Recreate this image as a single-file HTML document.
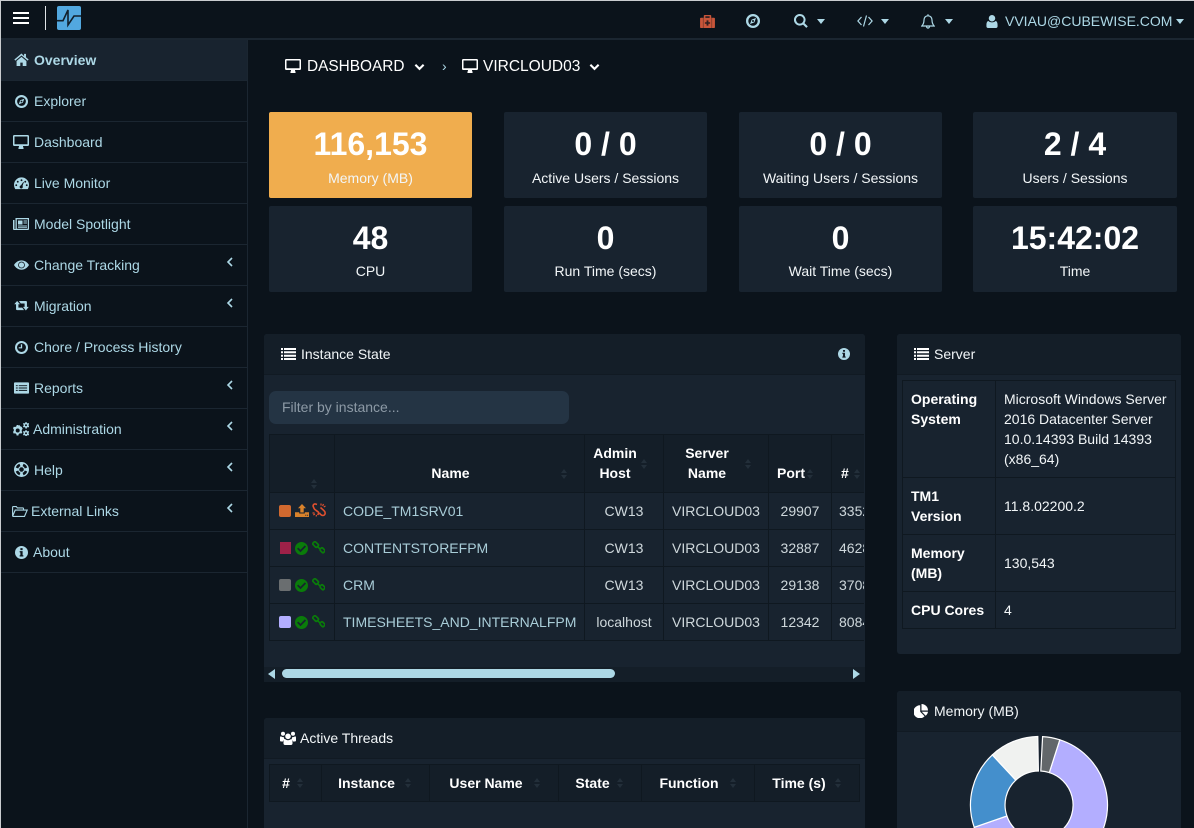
<!DOCTYPE html>
<html><head><meta charset="utf-8"><title>Dashboard</title>
<style>
*{box-sizing:border-box}
html,body{margin:0;padding:0;width:1194px;height:828px;overflow:hidden;background:#0b131b;font:14px/20px "Liberation Sans",sans-serif;color:#fff}
#wrap{position:absolute;left:0;top:0;width:1194px;height:828px;overflow:hidden;background:#0b131b}
.a{position:absolute}
.t{position:absolute;white-space:nowrap}
svg{position:absolute;display:block;overflow:visible}
#edge{left:0;top:0;width:1194px;height:828px;border-left:1px solid #c9cccf;border-top:1px solid #c9cccf;pointer-events:none;z-index:9}
#top{left:0;top:0;width:1194px;height:40px;background:#0b131b;border-bottom:2px solid #1b2631}
#side{left:0;top:40px;width:248px;height:788px;border-right:1px solid #1b2631;background:#0b131b}
.m{position:absolute;left:1px;width:246px;height:41px;border-bottom:1px solid #1b2631;color:#add8e6;line-height:40px}
.m .t{top:0}
.m.on{background:#18232f;font-weight:bold}
.card{position:absolute;width:203px;height:86px;background:#18232f;border-radius:2px;text-align:center}
.card b{display:block;font-size:32px;line-height:36px;margin-top:14px}
.card span{display:block;font-size:14px;line-height:20px;margin-top:6px;color:#f2f6f8}
.card.sec b{margin-top:14px}
.card.sec span{margin-top:5px}
.panel{position:absolute;background:#18232f;border-radius:3px}
.ph{position:absolute;left:0;top:0;right:0;height:41px;background:#141e28;border-bottom:1px solid #111a23;border-radius:3px 3px 0 0}
table{border-collapse:collapse;table-layout:fixed;position:absolute}
th,td{border:1px solid #0f1820}
#it{left:0;top:0;width:632px;font-size:14px}
#it th{background:#141e28;color:#fff;vertical-align:bottom;padding:8px 18px 9px 0;text-align:center;line-height:20px;height:58px}
#it td{height:37px;padding:0;text-align:center;color:#cfd8dc;overflow:hidden;white-space:nowrap}
#it td.n{text-align:left;padding-left:8px;color:#a9cdd8}
#it td.h{text-align:left;padding-left:7px}
#st{left:5px;top:46px;width:273px;color:#f2f6f8}
#st td{padding:8px;vertical-align:middle;text-align:left;line-height:20px}
#st th{padding:8px 8px 8px;vertical-align:top;text-align:left;line-height:20px;color:#fff}
#at{left:5px;top:46px;width:590px}
#at th{background:#141e28;height:37px;text-align:center;padding:0 16px 1px 0;font-weight:bold}
.s{position:absolute;width:7px;height:10px}
.s:before,.s:after{content:"";position:absolute;left:0;border-left:3.5px solid transparent;border-right:3.5px solid transparent}
.s:before{top:0;border-bottom:4px solid #232f3a}
.s:after{bottom:0;border-top:4px solid #232f3a}
</style></head><body>
<svg width="0" height="0" style="position:absolute">
<defs>
<symbol id="home" viewBox="0 0 16 14"><path fill="currentColor" d="M8 .6.300 7l1 1.200L8 2.700l6.700 5.500 1-1.200-2.900-2.400V1h-2v2.300L8 .6zM2.700 8.600V14h4V10.300h2.600V14h4V8.600L8 4.200 2.700 8.600z"/></symbol>
<symbol id="compass" viewBox="1 1 14 14"><path fill="currentColor" fill-rule="evenodd" d="M8 1a7 7 0 1 1 0 14A7 7 0 0 1 8 1zm0 2.300a4.700 4.700 0 1 0 0 9.400 4.700 4.700 0 0 0 0-9.400zM11 5l-1.600 4.400L5 11l1.600-4.400L11 5zM8 7a1 1 0 1 0 0 2 1 1 0 0 0 0-2z"/></symbol>
<symbol id="desk" viewBox="0 0 16 14"><path fill="currentColor" fill-rule="evenodd" d="M1.200 0h13.600C15.500 0 16 .5 16 1.200v8.600c0 .7-.5 1.200-1.200 1.200H10c0 .9.300 1.400.6 2 .2.400 0 1-.6 1H6c-.6 0-.8-.6-.6-1 .3-.6.6-1.100.6-2H1.200C.5 11 0 10.500 0 9.800V1.200C0 .5.500 0 1.200 0zM1.500 1.500v7.800h13V1.500h-13z"/></symbol>
<symbol id="gauge" viewBox="0 0 16 14"><path fill="currentColor" fill-rule="evenodd" d="M8 1a8 8 0 0 1 8 8c0 1.700-.5 3.200-1.300 4.500H1.300A8.300 8.300 0 0 1 0 9a8 8 0 0 1 8-8zM8 3a1 1 0 1 0 0 2 1 1 0 0 0 0-2zM4 4.600a1 1 0 1 0 0 2 1 1 0 0 0 0-2zM12 4.600a1 1 0 1 0 0 2 1 1 0 0 0 0-2zM2.400 8.300a1 1 0 1 0 0 2 1 1 0 0 0 0-2zM13.600 8.300a1 1 0 1 0 0 2 1 1 0 0 0 0-2zM10 5.800 7.400 9.500a1.700 1.700 0 1 0 1.700.7L10.500 6z"/></symbol>
<symbol id="news" viewBox="0 0 16 12"><path fill="currentColor" fill-rule="evenodd" d="M2.500 0H16v11c0 .6-.4 1-1 1H1c-.6 0-1-.4-1-1V2h1.500v9h1V0zM3.800 1.200v9.600h11V1.200h-11zM5 2.500h4.500v4H5v-4zM10.500 2.500H14v1h-3.500zM10.500 4.500H14v1h-3.500zM5 7.500h9v1H5zM5 9h9v.8H5z"/></symbol>
<symbol id="eye" viewBox="0 0 16 10"><path fill="currentColor" fill-rule="evenodd" d="M8 0c3.400 0 6.300 2 8 5-1.700 3-4.600 5-8 5S1.700 8 0 5c1.700-3 4.600-5 8-5zM8 1.400a3.600 3.600 0 1 0 0 7.200 3.600 3.600 0 0 0 0-7.200zM8 2.200a2.800 2.800 0 1 1 0 5.600 2.800 2.800 0 0 1 0-5.600z"/></symbol>
<symbol id="retweet" viewBox="0 0 16 11"><path fill="currentColor" d="M3.200 0 6.400 3.600H4.600v3.700h4.200L10.800 10H3.200c-.7 0-1.200-.5-1.200-1.100V3.600H0L3.200 0zM5.200 0h7.600c.7 0 1.200.5 1.200 1.100v5.300h2L12.800 10.500 9.600 6.400h1.800V2.700H7.200L5.200 0z"/></symbol>
<symbol id="clock" viewBox="1 1 14 14"><path fill="currentColor" fill-rule="evenodd" d="M8 1a7 7 0 1 1 0 14A7 7 0 0 1 8 1zm0 2.200a4.800 4.800 0 1 0 0 9.600 4.800 4.800 0 0 0 0-9.600zM7.300 4.500h1.400V9H5V7.700h2.300V4.500z"/></symbol>
<symbol id="list" viewBox="0 0 15 12"><path fill="currentColor" d="M0 0h2v2H0zM3 0h12v2H3zM0 3.300h2v2H0zM3 3.300h12v2H3zM0 6.700h2v2H0zM3 6.700h12v2H3zM0 10h2v2H0zM3 10h12v2H3z"/></symbol>
<symbol id="card" viewBox="0 0 16 12"><path fill="currentColor" fill-rule="evenodd" d="M1 0h14c.6 0 1 .4 1 1v10c0 .6-.4 1-1 1H1c-.6 0-1-.4-1-1V1c0-.6.4-1 1-1zm1 3v1h2V3H2zm3 0v1h9V3H5zM2 5.500v1h2v-1H2zm3 0v1h9v-1H5zM2 8v1h2V8H2zm3 0v1h9V8H5z"/></symbol>
<symbol id="cogs" viewBox="0 0 16 14"><path fill="currentColor" fill-rule="evenodd" d="M5 3.500 6.300 3l.9 1.300 1.500.6 1 1.800-.8 1-.3 1.400.8 1-1 1.500-1.500-.3-1.200.8-.3 1.400H3.600l-.3-1.400-1.200-.8-1.400.3L0 9.900l.8-1V7.300L0 6.300l.8-1.600 1.400.3 1.200-.8L3.700 3H5zM4.700 6.500a2 2 0 1 0 0 4 2 2 0 0 0 0-4zM12.500 0h1l.3 1 .9.400.9-.4.600.9-.6.800v1l.7.700-.6 1-.9-.3-.9.500-.2 1h-1.200l-.2-1-.9-.5-.9.300-.5-1 .6-.7v-1l-.6-.8.6-.9.9.4.8-.4.200-1zm.5 2.200a1 1 0 1 0 0 2 1 1 0 0 0 0-2zM12.500 8h1l.3 1 .9.400.9-.4.600.9-.6.800v1l.7.700-.6 1-.9-.3-.9.500-.2 1h-1.200l-.2-1-.9-.5-.9.300-.5-1 .6-.7v-1l-.6-.8.600-.9.900.4.800-.4.200-1zm.5 2.200a1 1 0 1 0 0 2 1 1 0 0 0 0-2z"/></symbol>
<symbol id="life" viewBox=".5 .5 15 15"><g transform="rotate(45 8 8)"><path fill="currentColor" fill-rule="evenodd" d="M8 .5a7.500 7.500 0 1 1 0 15 7.500 7.500 0 0 1 0-15zM5.400 2.500l1 2.400a3.400 3.400 0 0 1 3.200 0l1-2.400a6 6 0 0 0-5.200 0zM2.500 5.400A6 6 0 0 0 2.500 10.600l2.400-1a3.400 3.400 0 0 1 0-3.200l-2.400-1zM13.500 5.400l-2.400 1a3.400 3.400 0 0 1 0 3.200l2.400 1a6 6 0 0 0 0-5.200zM6.400 11.100l-1 2.400a6 6 0 0 0 5.200 0l-1-2.400a3.400 3.400 0 0 1-3.200 0zM8 5.700a2.300 2.300 0 1 0 0 4.600 2.300 2.300 0 0 0 0-4.600z"/></g></symbol>
<symbol id="folder" viewBox="0 0 16 11"><path fill="none" stroke="currentColor" stroke-width="1.100" d="M.6 10V1.300c0-.4.300-.7.700-.7h3l1 1.300h5.500c.4 0 .7.300.7.700v1.500M.7 10 3.200 4.100h12l-2.700 6.300H1c-.2 0-.3-.2-.3-.4z"/></symbol>
<symbol id="info" viewBox="1 1 14 14"><path fill="currentColor" fill-rule="evenodd" d="M8 1a7 7 0 1 1 0 14A7 7 0 0 1 8 1zM6.800 3.300v2.100h2.400V3.300H6.800zM6 6.500v1.400h.8v3H6v1.400h4v-1.400h-.8V6.500H6z"/></symbol>
<symbol id="chev" viewBox="0 0 8 12"><path fill="none" stroke="currentColor" stroke-width="1.600" d="M6 2 2 6l4 4"/></symbol>
<symbol id="down" viewBox="0 0 12 8"><path fill="none" stroke="currentColor" stroke-width="2.300" d="M1.500 1.500 6 6l4.500-4.500"/></symbol>
<symbol id="check" viewBox="0 0 14 14"><path fill="currentColor" fill-rule="evenodd" d="M7 0a7 7 0 1 1 0 14A7 7 0 0 1 7 0zm3.600 3.700L5.900 8.300 3.500 6 2.200 7.300l3.700 3.700 6-6-1.300-1.300z"/></symbol>
<symbol id="link" viewBox="0 0 14 14"><g fill="none" stroke="currentColor" stroke-width="1.800"><path d="M2 1.300 1.300 2c-.6.600-.6 1.400 0 2l2.300 2.300c.6.600 1.400.6 2 0L6.500 5.500c.6-.6.600-1.400 0-2L4.200 1.300c-.6-.6-1.600-.6-2.200 0z"/><path d="M9.800 7.700l-.7.700c-.6.600-.6 1.400 0 2l1.700 1.700c.6.600 1.400.6 2 0l.6-.7c.6-.6.600-1.400 0-2L11.700 7.700c-.6-.6-1.300-.6-1.900 0z"/><path d="M5.300 5.300l3.500 3.500"/></g></symbol>
<symbol id="unlink" viewBox="0 0 14 14"><g fill="none" stroke="currentColor" stroke-width="1.600"><path d="M5 1.500 3.500 1C2 .6.700 2 1.200 3.500L2 5.300c.4 1 1 1.500 2 2l2 1.500c1 .8 1 1.500.3 2.200l-.8.800"/><path d="M8.500 4.500l2 1.800c1 .9 2.400 2 2.600 3.200.3 1.500-.6 3-2.300 3-.9 0-1.800-.6-2.500-1.300L7.500 10"/><path stroke-width="1.200" d="M9 .5V2.500M11.500 1 10.600 3M13.500 3 11.800 4M.5 10h2M1.300 12l1.700-1M4 13.500l.6-1.500"/></g></symbol>
<symbol id="upload" viewBox="0 0 14 13"><path fill="currentColor" fill-rule="evenodd" d="M7 0l4 4.200H8.700v4.300H5.300V4.200H3L7 0zM0 8.200h4.200v1.300h5.600V8.200H14V13H0V8.200zm10.300 2.500v1h1v-1h-1zm1.800 0v1h1v-1h-1z"/></symbol>
<symbol id="medkit" viewBox="0 0 16 14"><path fill="currentColor" fill-rule="evenodd" d="M5 0h6c.6 0 1 .4 1 1v2h3c.6 0 1 .4 1 1v9c0 .6-.4 1-1 1H1c-.6 0-1-.4-1-1V4c0-.6.4-1 1-1h3V1c0-.6.4-1 1-1zm.7 1.500V3h4.600V1.500H5.700z"/><path fill="#0b131b" opacity=".35" d="M3 3h1v11H3zM12 3h1v11h-1z"/><path fill="#0b131b" opacity=".8" d="M7 5.800h2v2h1.800v1.600H9v2H7v-2H5.200V7.800H7z"/></symbol>
<symbol id="search" viewBox="0 0 14 14"><path fill="currentColor" fill-rule="evenodd" d="M5.800 0a5.800 5.800 0 0 1 4.700 9.100l3.300 3.300-1.500 1.500-3.300-3.300A5.800 5.800 0 1 1 5.800 0zm0 2a3.800 3.800 0 1 0 0 7.600 3.800 3.800 0 0 0 0-7.600z"/></symbol>
<symbol id="code" viewBox="0 0 16 12"><path fill="none" stroke="currentColor" stroke-width="1.200" d="M4.500 2 .9 6l3.600 4M11.500 2l3.600 4-3.600 4M9.500.5l-3 11"/></symbol>
<symbol id="bell" viewBox="0 0 14 15"><path fill="none" stroke="currentColor" stroke-width="1.200" d="M7 1.800c-2.600 0-4 2-4 4.200 0 3-1 4.800-2.200 6h12.400C12 10.800 11 9 11 6c0-2.200-1.400-4.200-4-4.200zM7 .3v1.500M5.500 12.300c0 1 .7 1.800 1.500 1.800s1.500-.8 1.500-1.800"/></symbol>
<symbol id="user" viewBox="0 0 12 14"><path fill="currentColor" d="M6 0a3.500 3.500 0 1 1 0 7 3.500 3.500 0 0 1 0-7zM2.200 6.500C3 7.400 4.400 8 6 8s3-.6 3.800-1.500C11.300 6.800 12 8.300 12 11v1.300c0 1-.7 1.700-1.700 1.700H1.700C.7 14 0 13.300 0 12.300V11c0-2.700.7-4.200 2.200-4.500z"/></symbol>
<symbol id="pie" viewBox="0 0 14 14"><path fill="currentColor" d="M6.200 1.300v6.500l4.400 4.500A6.500 6.500 0 1 1 6.200 1.300zM7.500 0A6.500 6.500 0 0 1 14 6.500H7.500V0zM7.800 7.800H14a6.300 6.300 0 0 1-2.300 3.900L7.800 7.800z"/></symbol>
<symbol id="users" viewBox="0 0 16 14"><path fill="currentColor" d="M8 2.500a2.800 2.800 0 1 1 0 5.600 2.800 2.800 0 0 1 0-5.600zM3 .8a2 2 0 1 1 0 4 2 2 0 0 1 0-4zM13 .8a2 2 0 1 1 0 4 2 2 0 0 1 0-4zM0 6.800c0-1 .4-1.500 1-1.500.5.500 1.200.8 2 .8.300 0 .6 0 .8-.1 0 .9.400 1.800 1 2.500-.9.300-1.500 1-1.800 2H1c-.6 0-1-.4-1-1V6.800zM16 6.800c0-1-.4-1.500-1-1.500-.5.500-1.200.8-2 .8-.3 0-.6 0-.8-.1 0 .9-.4 1.800-1 2.500.9.300 1.500 1 1.800 2H15c.6 0 1-.4 1-1V6.800zM5 8c.7.700 1.800 1.200 3 1.200s2.300-.5 3-1.200c1 .3 1.500 1.500 1.500 3.200v1.300c0 .8-.6 1.500-1.500 1.500H5c-.9 0-1.500-.7-1.500-1.500v-1.300C3.500 9.500 4 8.300 5 8z"/></symbol>
</defs></svg>

<div id="wrap">
<div class="a" id="top">
  <div class="a" style="left:13px;top:12px;width:16px;height:2px;background:#fff"></div>
  <div class="a" style="left:13px;top:17px;width:16px;height:2px;background:#fff"></div>
  <div class="a" style="left:13px;top:22px;width:16px;height:2px;background:#fff"></div>
  <div class="a" style="left:45px;top:6px;width:1px;height:24px;background:#dfe3e6"></div>
  <svg style="left:57px;top:6px" width="24" height="24" viewBox="0 0 24 24"><rect width="24" height="24" rx="2" fill="#52a8e0"/><path d="M0 14.700h6L11 4v15l6-9h7" fill="none" stroke="#12202c" stroke-width="1.600"/></svg>
  <svg style="left:700px;top:15px;color:#c8553a" width="15" height="13"><use href="#medkit"/></svg>
  <svg style="left:746px;top:14px;color:#add8e6" width="14" height="14"><use href="#compass"/></svg>
  <svg style="left:794px;top:14px;color:#add8e6" width="14" height="14"><use href="#search"/></svg>
  <div class="a" style="left:817px;top:19px;border:4.500px solid transparent;border-top:5px solid #add8e6;border-bottom:0"></div>
  <svg style="left:857px;top:15px;color:#add8e6" width="16" height="12"><use href="#code"/></svg>
  <div class="a" style="left:881px;top:19px;border:4.500px solid transparent;border-top:5px solid #add8e6;border-bottom:0"></div>
  <svg style="left:921px;top:14px;color:#add8e6" width="14" height="15"><use href="#bell"/></svg>
  <div class="a" style="left:945px;top:19px;border:4.500px solid transparent;border-top:5px solid #add8e6;border-bottom:0"></div>
  <svg style="left:986px;top:15px;color:#add8e6" width="12" height="13"><use href="#user"/></svg>
  <span class="t" style="left:1005px;top:11px;color:#add8e6">VVIAU@CUBEWISE.COM</span>
  <div class="a" style="left:1176px;top:19px;border:4.500px solid transparent;border-top:5px solid #add8e6;border-bottom:0"></div>
</div>

<div class="a" id="side">
  <div class="m on" style="top:0"><svg style="left:13px;top:13px" width="15" height="13"><use href="#home"/></svg><span class="t" style="left:33px">Overview</span></div>
  <div class="m" style="top:41px"><svg style="left:14px;top:14px" width="13" height="13"><use href="#compass"/></svg><span class="t" style="left:33px">Explorer</span></div>
  <div class="m" style="top:82px"><svg style="left:12px;top:13px" width="16" height="14"><use href="#desk"/></svg><span class="t" style="left:33px">Dashboard</span></div>
  <div class="m" style="top:123px"><svg style="left:13px;top:13px" width="15" height="14"><use href="#gauge"/></svg><span class="t" style="left:33px">Live Monitor</span></div>
  <div class="m" style="top:164px"><svg style="left:12px;top:14px" width="16" height="12"><use href="#news"/></svg><span class="t" style="left:33px">Model Spotlight</span></div>
  <div class="m" style="top:205px"><svg style="left:13px;top:15px" width="15" height="10"><use href="#eye"/></svg><span class="t" style="left:33px">Change Tracking</span><svg style="left:225px;top:11px" width="8" height="12"><use href="#chev"/></svg></div>
  <div class="m" style="top:246px"><svg style="left:13px;top:15px" width="15" height="10"><use href="#retweet"/></svg><span class="t" style="left:33px">Migration</span><svg style="left:225px;top:11px" width="8" height="12"><use href="#chev"/></svg></div>
  <div class="m" style="top:287px"><svg style="left:14px;top:14px" width="13" height="13"><use href="#clock"/></svg><span class="t" style="left:33px">Chore / Process History</span></div>
  <div class="m" style="top:328px"><svg style="left:13px;top:14px" width="15" height="12"><use href="#card"/></svg><span class="t" style="left:33px">Reports</span><svg style="left:225px;top:11px" width="8" height="12"><use href="#chev"/></svg></div>
  <div class="m" style="top:369px"><svg style="left:12px;top:13px" width="16" height="14"><use href="#cogs"/></svg><span class="t" style="left:32px">Administration</span><svg style="left:225px;top:11px" width="8" height="12"><use href="#chev"/></svg></div>
  <div class="m" style="top:410px"><svg style="left:13px;top:12px" width="15" height="15"><use href="#life"/></svg><span class="t" style="left:33px">Help</span><svg style="left:225px;top:11px" width="8" height="12"><use href="#chev"/></svg></div>
  <div class="m" style="top:451px"><svg style="left:11px;top:15px" width="16" height="11"><use href="#folder"/></svg><span class="t" style="left:30px">External Links</span><svg style="left:225px;top:11px" width="8" height="12"><use href="#chev"/></svg></div>
  <div class="m" style="top:492px"><svg style="left:14px;top:14px" width="13" height="13"><use href="#info"/></svg><span class="t" style="left:32px">About</span></div>
</div>

<svg style="left:285px;top:59px;color:#fff" width="16" height="14"><use href="#desk"/></svg>
<span class="t" style="left:307px;top:57px;font-size:15.400px">DASHBOARD</span>
<svg style="left:414px;top:63px;color:#fff" width="11" height="8"><use href="#down"/></svg>
<span class="t" style="left:442px;top:56px;color:#add8e6;font-size:14px">›</span>
<svg style="left:462px;top:59px;color:#fff" width="16" height="14"><use href="#desk"/></svg>
<span class="t" style="left:483px;top:57px;font-size:15.500px">VIRCLOUD03</span>
<svg style="left:589px;top:63px;color:#fff" width="11" height="8"><use href="#down"/></svg>

<div class="card" style="left:269px;top:112px;background:#f0ad4e"><b>116,153</b><span>Memory (MB)</span></div>
<div class="card" style="left:504px;top:112px"><b>0 / 0</b><span>Active Users / Sessions</span></div>
<div class="card" style="left:739px;top:112px"><b>0 / 0</b><span>Waiting Users / Sessions</span></div>
<div class="card" style="left:973px;top:112px;width:204px"><b>2 / 4</b><span>Users / Sessions</span></div>
<div class="card sec" style="left:269px;top:206px"><b>48</b><span>CPU</span></div>
<div class="card sec" style="left:504px;top:206px"><b>0</b><span>Run Time (secs)</span></div>
<div class="card sec" style="left:739px;top:206px"><b>0</b><span>Wait Time (secs)</span></div>
<div class="card sec" style="left:973px;top:206px;width:204px"><b>15:42:02</b><span>Time</span></div>

<div class="panel" style="left:264px;top:334px;width:601px;height:348px">
  <div class="ph"></div>
  <svg style="left:17px;top:14px;color:#fff" width="15" height="12"><use href="#list"/></svg>
  <span class="t" style="left:37px;top:10px;color:#f2f6f8">Instance State</span>
  <svg style="left:574px;top:14px;color:#add8e6" width="12" height="12"><use href="#info"/></svg>
  <div class="a" style="left:5px;top:57px;width:300px;height:33px;background:#243444;border-radius:7px;color:#8d9aa6;padding:6px 13px">Filter by instance...</div>
  <div class="a" style="left:5px;top:100px;width:595px;height:207px;overflow:hidden">
    <table id="it">
      <colgroup><col style="width:65px"><col style="width:250px"><col style="width:79px"><col style="width:105px"><col style="width:63px"><col style="width:70px"></colgroup>
      <tr><th></th><th>Name</th><th>Admin<br>Host</th><th>Server<br>Name</th><th>Port</th><th style="text-align:left;padding-left:9px">#</th></tr>
      <tr><td></td><td class="n">CODE_TM1SRV01</td><td>CW13</td><td>VIRCLOUD03</td><td>29907</td><td class="h">3352</td></tr>
      <tr><td></td><td class="n">CONTENTSTOREFPM</td><td>CW13</td><td>VIRCLOUD03</td><td>32887</td><td class="h">4628</td></tr>
      <tr><td></td><td class="n">CRM</td><td>CW13</td><td>VIRCLOUD03</td><td>29138</td><td class="h">3708</td></tr>
      <tr><td></td><td class="n">TIMESHEETS_AND_INTERNALFPM</td><td>localhost</td><td>VIRCLOUD03</td><td>12342</td><td class="h">8084</td></tr>
    </table>
    <i class="s" style="left:42px;top:45px"></i><i class="s" style="left:292px;top:35px"></i><i class="s" style="left:372px;top:25px"></i><i class="s" style="left:476px;top:25px"></i><i class="s" style="left:538px;top:35px"></i><i class="s" style="left:585px;top:35px"></i>
  </div>
  <div class="a" style="left:15px;top:171px;width:12px;height:12px;background:#d1692f;border-radius:2px"></div>
  <svg style="left:31px;top:170px;color:#d9822b" width="14" height="13"><use href="#upload"/></svg>
  <svg style="left:48px;top:169px;color:#e0502f" width="14" height="14"><use href="#unlink"/></svg>
  <div class="a" style="left:16px;top:208px;width:11px;height:12px;background:#9e2148"></div>
  <svg style="left:31px;top:208px;color:#0a7c0a" width="13" height="13"><use href="#check"/></svg>
  <svg style="left:48px;top:207px;color:#0a7c0a" width="13" height="13"><use href="#link"/></svg>
  <div class="a" style="left:15px;top:245px;width:12px;height:12px;background:#6a6e70;border-radius:2px"></div>
  <svg style="left:31px;top:245px;color:#0a7c0a" width="13" height="13"><use href="#check"/></svg>
  <svg style="left:48px;top:244px;color:#0a7c0a" width="13" height="13"><use href="#link"/></svg>
  <div class="a" style="left:15px;top:282px;width:12px;height:12px;background:#b3aeff;border-radius:2px"></div>
  <svg style="left:31px;top:282px;color:#0a7c0a" width="13" height="13"><use href="#check"/></svg>
  <svg style="left:48px;top:281px;color:#0a7c0a" width="13" height="13"><use href="#link"/></svg>
  <div class="a" style="left:0;top:333px;width:601px;height:15px;background:#141e28"></div>
  <div class="a" style="left:4px;top:335px;border:5px solid transparent;border-right:7px solid #add8e6;border-left:0"></div>
  <div class="a" style="left:18px;top:335px;width:333px;height:9px;background:#add8e6;border-radius:5px"></div>
  <div class="a" style="left:589px;top:335px;border:5px solid transparent;border-left:7px solid #add8e6;border-right:0"></div>
</div>

<div class="panel" style="left:897px;top:334px;width:284px;height:320px">
  <div class="ph"></div>
  <svg style="left:17px;top:14px;color:#fff" width="15" height="12"><use href="#list"/></svg>
  <span class="t" style="left:37px;top:10px;color:#f2f6f8">Server</span>
  <table id="st">
    <colgroup><col style="width:93px"><col style="width:180px"></colgroup>
    <tr style="height:97px"><th>Operating System</th><td>Microsoft Windows Server 2016 Datacenter Server 10.0.14393 Build 14393 (x86_64)</td></tr>
    <tr style="height:57px"><th>TM1 Version</th><td>11.8.02200.2</td></tr>
    <tr style="height:57px"><th>Memory (MB)</th><td>130,543</td></tr>
    <tr style="height:37px"><th>CPU Cores</th><td>4</td></tr>
  </table>
</div>

<div class="panel" style="left:264px;top:718px;width:601px;height:110px;border-radius:3px 3px 0 0">
  <div class="ph"></div>
  <svg style="left:16px;top:13px;color:#fff" width="16" height="14"><use href="#users"/></svg>
  <span class="t" style="left:36px;top:10px;color:#f2f6f8">Active Threads</span>
  <table id="at">
    <colgroup><col style="width:52px"><col style="width:108px"><col style="width:129px"><col style="width:83px"><col style="width:113px"><col style="width:105px"></colgroup>
    <tr><th style="padding-right:19px">#</th><th style="padding-right:18px">Instance</th><th>User Name</th><th style="padding-right:15px">State</th><th style="padding-right:18px">Function</th><th>Time (s)</th></tr>
  </table>
  <i class="s" style="left:33px;top:60px"></i><i class="s" style="left:141px;top:60px"></i><i class="s" style="left:270px;top:60px"></i><i class="s" style="left:353px;top:60px"></i><i class="s" style="left:466px;top:60px"></i><i class="s" style="left:571px;top:60px"></i>
</div>

<div class="panel" style="left:897px;top:691px;width:284px;height:137px;border-radius:3px 3px 0 0">
  <div class="ph"></div>
  <svg style="left:17px;top:13px;color:#fff" width="14" height="14"><use href="#pie"/></svg>
  <span class="t" style="left:37px;top:10px;color:#f2f6f8">Memory (MB)</span>
</div>
<svg style="left:965px;top:731px;overflow:hidden" width="148" height="97" viewBox="965 731 148 97">
  <g stroke="#fff" stroke-width="1.200">
    <path fill="#b3aeff" d="M1059.800 739.800A68.500 68.500 0 1 1 974.200 827.300L1006.900 816A34 34 0 1 0 1049.300 772.600Z"/>
    <path fill="#448fcc" d="M974.200 827.300A68.500 68.500 0 0 1 992.300 754.900L1015.800 780.100A34 34 0 0 0 1006.900 816Z"/>
    <path fill="#f0f2f0" d="M992.300 754.900A68.500 68.500 0 0 1 1037.800 736.500L1038.400 771A34 34 0 0 0 1015.800 780.100Z"/>
    <path fill="#62676a" d="M1042.600 736.600A68.500 68.500 0 0 1 1059.800 739.800L1049.300 772.600A34 34 0 0 0 1040.800 771Z"/>
  </g>
</svg>
<div class="a" id="edge"></div>
</div>
</body></html>
